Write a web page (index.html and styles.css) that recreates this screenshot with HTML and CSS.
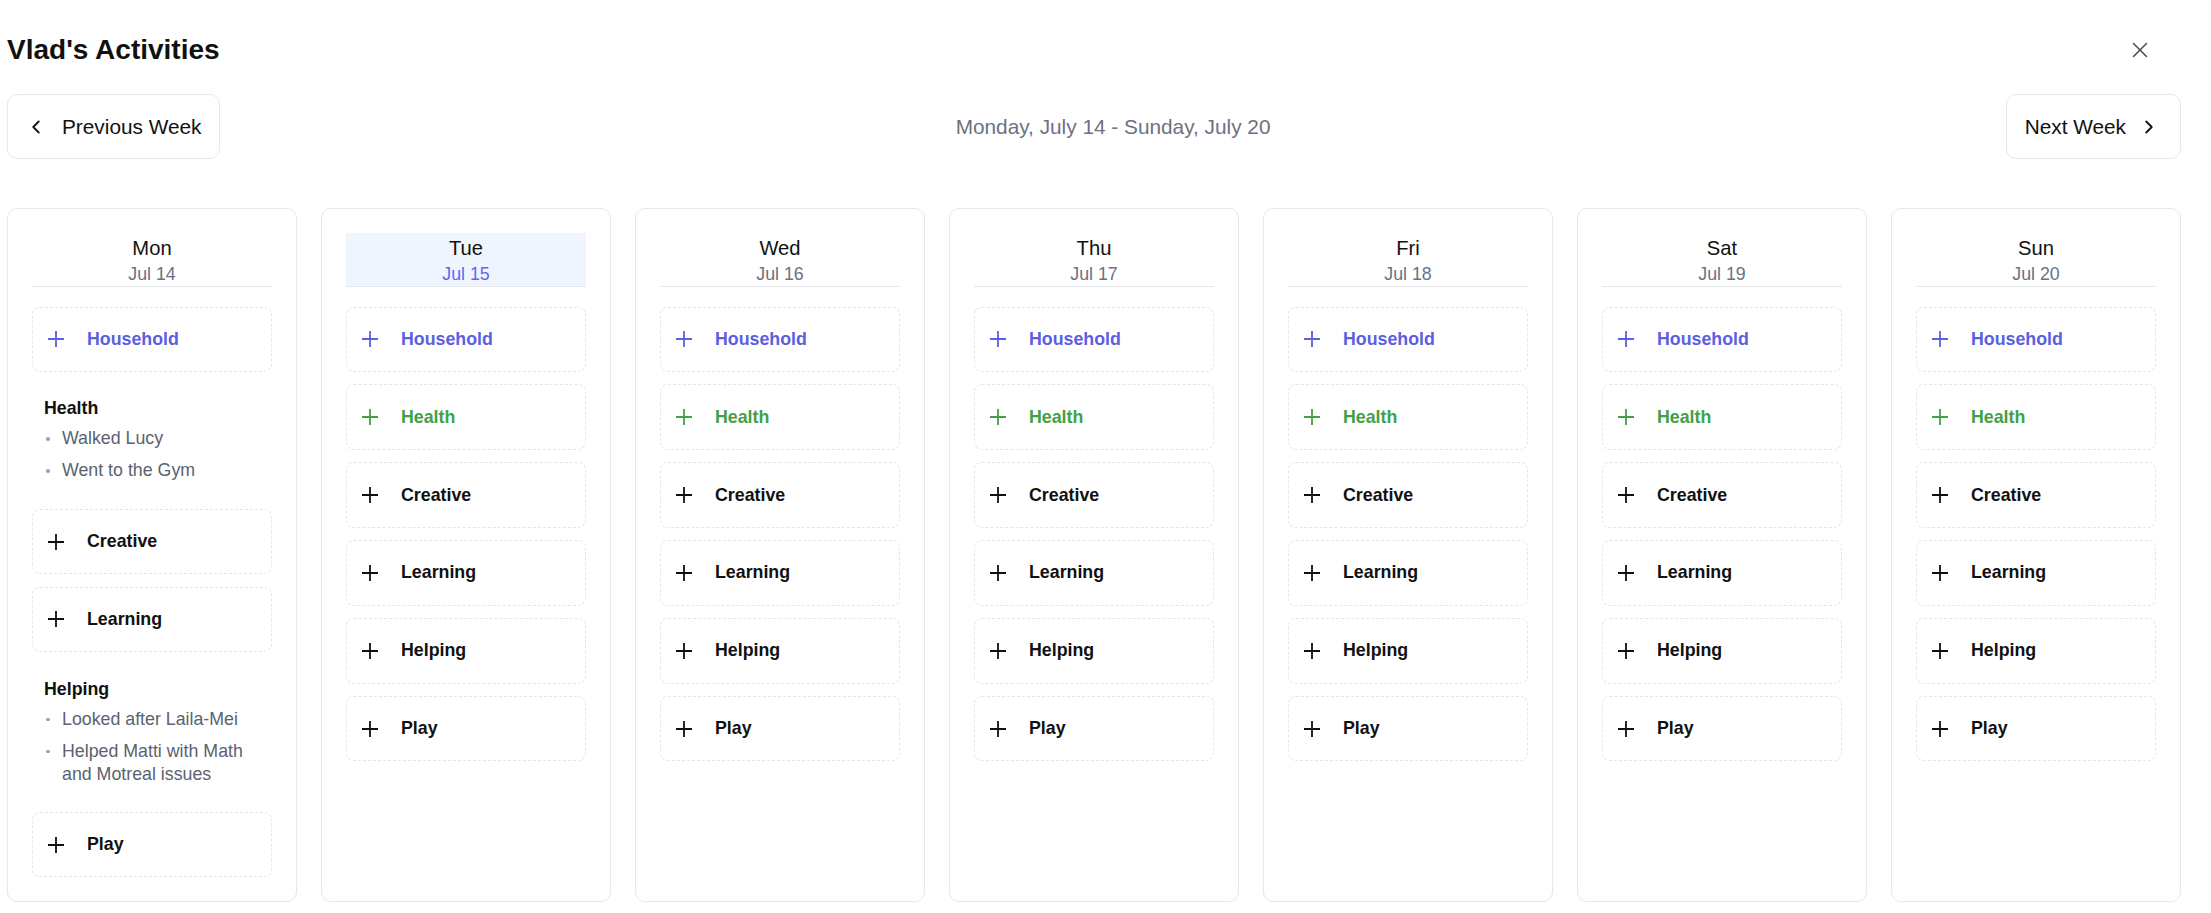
FILE: index.html
```html
<!DOCTYPE html>
<html lang="en">
<head>
<meta charset="utf-8">
<title>Vlad's Activities</title>
<link rel="stylesheet" href="styles.css">
</head>
<body>
<div class="page">
  <header class="top">
    <h1 class="title">Vlad's Activities</h1>
    <button class="close" aria-label="Close">
      <svg width="16" height="16" viewBox="0 0 16 16"><path d="M1.5 1.5l13 13M14.5 1.5l-13 13" stroke="#4b4b4b" stroke-width="1.5" stroke-linecap="round" fill="none"/></svg>
    </button>
  </header>

  <nav class="weeknav">
    <button class="navbtn navbtn-prev">
      <svg width="22" height="22" viewBox="0 0 24 24"><path d="M15 18l-6-6 6-6" stroke="#111" stroke-width="2" stroke-linecap="round" stroke-linejoin="round" fill="none"/></svg>
      <span>Previous Week</span>
    </button>
    <div class="range">Monday, July 14 - Sunday, July 20</div>
    <button class="navbtn navbtn-next">
      <span>Next Week</span>
      <svg width="22" height="22" viewBox="0 0 24 24"><path d="M9 18l6-6-6-6" stroke="#111" stroke-width="2" stroke-linecap="round" stroke-linejoin="round" fill="none"/></svg>
    </button>
  </nav>

  <div class="week">
    <section class="day">
      <div class="dayhead"><div class="dname">Mon</div><div class="ddate">Jul 14</div></div>
      <div class="items">
        <button class="add household"><svg width="16" height="16" viewBox="0 0 16 16"><path d="M0 8h16M8 0v16" stroke="currentColor" stroke-width="1.8" fill="none"/></svg><span>Household</span></button>
        <div class="entry">
          <div class="entry-title">Health</div>
          <ul class="entry-list"><li>Walked Lucy</li><li>Went to the Gym</li></ul>
        </div>
        <button class="add"><svg width="16" height="16" viewBox="0 0 16 16"><path d="M0 8h16M8 0v16" stroke="currentColor" stroke-width="1.8" fill="none"/></svg><span>Creative</span></button>
        <button class="add"><svg width="16" height="16" viewBox="0 0 16 16"><path d="M0 8h16M8 0v16" stroke="currentColor" stroke-width="1.8" fill="none"/></svg><span>Learning</span></button>
        <div class="entry">
          <div class="entry-title">Helping</div>
          <ul class="entry-list"><li>Looked after Laila-Mei</li><li>Helped Matti with Math and Motreal issues</li></ul>
        </div>
        <button class="add"><svg width="16" height="16" viewBox="0 0 16 16"><path d="M0 8h16M8 0v16" stroke="currentColor" stroke-width="1.8" fill="none"/></svg><span>Play</span></button>
      </div>
    </section>

    <section class="day">
      <div class="dayhead today"><div class="dname">Tue</div><div class="ddate">Jul 15</div></div>
      <div class="items">
        <button class="add household"><svg width="16" height="16" viewBox="0 0 16 16"><path d="M0 8h16M8 0v16" stroke="currentColor" stroke-width="1.8" fill="none"/></svg><span>Household</span></button>
        <button class="add health"><svg width="16" height="16" viewBox="0 0 16 16"><path d="M0 8h16M8 0v16" stroke="currentColor" stroke-width="1.8" fill="none"/></svg><span>Health</span></button>
        <button class="add"><svg width="16" height="16" viewBox="0 0 16 16"><path d="M0 8h16M8 0v16" stroke="currentColor" stroke-width="1.8" fill="none"/></svg><span>Creative</span></button>
        <button class="add"><svg width="16" height="16" viewBox="0 0 16 16"><path d="M0 8h16M8 0v16" stroke="currentColor" stroke-width="1.8" fill="none"/></svg><span>Learning</span></button>
        <button class="add"><svg width="16" height="16" viewBox="0 0 16 16"><path d="M0 8h16M8 0v16" stroke="currentColor" stroke-width="1.8" fill="none"/></svg><span>Helping</span></button>
        <button class="add"><svg width="16" height="16" viewBox="0 0 16 16"><path d="M0 8h16M8 0v16" stroke="currentColor" stroke-width="1.8" fill="none"/></svg><span>Play</span></button>
      </div>
    </section>

    <section class="day">
      <div class="dayhead"><div class="dname">Wed</div><div class="ddate">Jul 16</div></div>
      <div class="items">
        <button class="add household"><svg width="16" height="16" viewBox="0 0 16 16"><path d="M0 8h16M8 0v16" stroke="currentColor" stroke-width="1.8" fill="none"/></svg><span>Household</span></button>
        <button class="add health"><svg width="16" height="16" viewBox="0 0 16 16"><path d="M0 8h16M8 0v16" stroke="currentColor" stroke-width="1.8" fill="none"/></svg><span>Health</span></button>
        <button class="add"><svg width="16" height="16" viewBox="0 0 16 16"><path d="M0 8h16M8 0v16" stroke="currentColor" stroke-width="1.8" fill="none"/></svg><span>Creative</span></button>
        <button class="add"><svg width="16" height="16" viewBox="0 0 16 16"><path d="M0 8h16M8 0v16" stroke="currentColor" stroke-width="1.8" fill="none"/></svg><span>Learning</span></button>
        <button class="add"><svg width="16" height="16" viewBox="0 0 16 16"><path d="M0 8h16M8 0v16" stroke="currentColor" stroke-width="1.8" fill="none"/></svg><span>Helping</span></button>
        <button class="add"><svg width="16" height="16" viewBox="0 0 16 16"><path d="M0 8h16M8 0v16" stroke="currentColor" stroke-width="1.8" fill="none"/></svg><span>Play</span></button>
      </div>
    </section>

    <section class="day">
      <div class="dayhead"><div class="dname">Thu</div><div class="ddate">Jul 17</div></div>
      <div class="items">
        <button class="add household"><svg width="16" height="16" viewBox="0 0 16 16"><path d="M0 8h16M8 0v16" stroke="currentColor" stroke-width="1.8" fill="none"/></svg><span>Household</span></button>
        <button class="add health"><svg width="16" height="16" viewBox="0 0 16 16"><path d="M0 8h16M8 0v16" stroke="currentColor" stroke-width="1.8" fill="none"/></svg><span>Health</span></button>
        <button class="add"><svg width="16" height="16" viewBox="0 0 16 16"><path d="M0 8h16M8 0v16" stroke="currentColor" stroke-width="1.8" fill="none"/></svg><span>Creative</span></button>
        <button class="add"><svg width="16" height="16" viewBox="0 0 16 16"><path d="M0 8h16M8 0v16" stroke="currentColor" stroke-width="1.8" fill="none"/></svg><span>Learning</span></button>
        <button class="add"><svg width="16" height="16" viewBox="0 0 16 16"><path d="M0 8h16M8 0v16" stroke="currentColor" stroke-width="1.8" fill="none"/></svg><span>Helping</span></button>
        <button class="add"><svg width="16" height="16" viewBox="0 0 16 16"><path d="M0 8h16M8 0v16" stroke="currentColor" stroke-width="1.8" fill="none"/></svg><span>Play</span></button>
      </div>
    </section>

    <section class="day">
      <div class="dayhead"><div class="dname">Fri</div><div class="ddate">Jul 18</div></div>
      <div class="items">
        <button class="add household"><svg width="16" height="16" viewBox="0 0 16 16"><path d="M0 8h16M8 0v16" stroke="currentColor" stroke-width="1.8" fill="none"/></svg><span>Household</span></button>
        <button class="add health"><svg width="16" height="16" viewBox="0 0 16 16"><path d="M0 8h16M8 0v16" stroke="currentColor" stroke-width="1.8" fill="none"/></svg><span>Health</span></button>
        <button class="add"><svg width="16" height="16" viewBox="0 0 16 16"><path d="M0 8h16M8 0v16" stroke="currentColor" stroke-width="1.8" fill="none"/></svg><span>Creative</span></button>
        <button class="add"><svg width="16" height="16" viewBox="0 0 16 16"><path d="M0 8h16M8 0v16" stroke="currentColor" stroke-width="1.8" fill="none"/></svg><span>Learning</span></button>
        <button class="add"><svg width="16" height="16" viewBox="0 0 16 16"><path d="M0 8h16M8 0v16" stroke="currentColor" stroke-width="1.8" fill="none"/></svg><span>Helping</span></button>
        <button class="add"><svg width="16" height="16" viewBox="0 0 16 16"><path d="M0 8h16M8 0v16" stroke="currentColor" stroke-width="1.8" fill="none"/></svg><span>Play</span></button>
      </div>
    </section>

    <section class="day">
      <div class="dayhead"><div class="dname">Sat</div><div class="ddate">Jul 19</div></div>
      <div class="items">
        <button class="add household"><svg width="16" height="16" viewBox="0 0 16 16"><path d="M0 8h16M8 0v16" stroke="currentColor" stroke-width="1.8" fill="none"/></svg><span>Household</span></button>
        <button class="add health"><svg width="16" height="16" viewBox="0 0 16 16"><path d="M0 8h16M8 0v16" stroke="currentColor" stroke-width="1.8" fill="none"/></svg><span>Health</span></button>
        <button class="add"><svg width="16" height="16" viewBox="0 0 16 16"><path d="M0 8h16M8 0v16" stroke="currentColor" stroke-width="1.8" fill="none"/></svg><span>Creative</span></button>
        <button class="add"><svg width="16" height="16" viewBox="0 0 16 16"><path d="M0 8h16M8 0v16" stroke="currentColor" stroke-width="1.8" fill="none"/></svg><span>Learning</span></button>
        <button class="add"><svg width="16" height="16" viewBox="0 0 16 16"><path d="M0 8h16M8 0v16" stroke="currentColor" stroke-width="1.8" fill="none"/></svg><span>Helping</span></button>
        <button class="add"><svg width="16" height="16" viewBox="0 0 16 16"><path d="M0 8h16M8 0v16" stroke="currentColor" stroke-width="1.8" fill="none"/></svg><span>Play</span></button>
      </div>
    </section>

    <section class="day">
      <div class="dayhead"><div class="dname">Sun</div><div class="ddate">Jul 20</div></div>
      <div class="items">
        <button class="add household"><svg width="16" height="16" viewBox="0 0 16 16"><path d="M0 8h16M8 0v16" stroke="currentColor" stroke-width="1.8" fill="none"/></svg><span>Household</span></button>
        <button class="add health"><svg width="16" height="16" viewBox="0 0 16 16"><path d="M0 8h16M8 0v16" stroke="currentColor" stroke-width="1.8" fill="none"/></svg><span>Health</span></button>
        <button class="add"><svg width="16" height="16" viewBox="0 0 16 16"><path d="M0 8h16M8 0v16" stroke="currentColor" stroke-width="1.8" fill="none"/></svg><span>Creative</span></button>
        <button class="add"><svg width="16" height="16" viewBox="0 0 16 16"><path d="M0 8h16M8 0v16" stroke="currentColor" stroke-width="1.8" fill="none"/></svg><span>Learning</span></button>
        <button class="add"><svg width="16" height="16" viewBox="0 0 16 16"><path d="M0 8h16M8 0v16" stroke="currentColor" stroke-width="1.8" fill="none"/></svg><span>Helping</span></button>
        <button class="add"><svg width="16" height="16" viewBox="0 0 16 16"><path d="M0 8h16M8 0v16" stroke="currentColor" stroke-width="1.8" fill="none"/></svg><span>Play</span></button>
      </div>
    </section>
  </div>
</div>
</body>
</html>
```

FILE: styles.css
```css
* { box-sizing: border-box; }

body {
  margin: 0;
  background: #fff;
  color: #111;
  font-family: "Liberation Sans", Arial, sans-serif;
}

button {
  font: inherit;
  color: inherit;
  background: #fff;
  cursor: pointer;
}

.page {
  padding: 32px 30px 0 7px;
}

.top {
  display: flex;
  justify-content: space-between;
  align-items: center;
  height: 36px;
  padding-right: 25px;
}

.title {
  margin: 0;
  font-size: 28px;
  line-height: 36px;
  font-weight: 700;
  color: #111;
}

.close {
  display: flex;
  align-items: center;
  justify-content: center;
  width: 32px;
  height: 32px;
  padding: 0;
  border: 0;
  background: transparent;
}

.weeknav {
  display: flex;
  justify-content: space-between;
  align-items: center;
  margin-top: 26px;
}

.navbtn {
  display: flex;
  align-items: center;
  height: 65px;
  border: 1px solid #e5e7eb;
  border-radius: 10px;
  font-size: 20.8px;
  color: #111;
}

.navbtn svg { flex: none; }

.navbtn-prev {
  gap: 15px;
  padding: 0 18px 0 17px;
}

.navbtn-next {
  gap: 12px;
  padding: 0 20px 0 18px;
}

.range {
  font-size: 20.8px;
  color: #6b7280;
}

.week {
  display: grid;
  grid-template-columns: repeat(7, 1fr);
  gap: 24px;
  margin-top: 49px;
  align-items: stretch;
}

.day {
  border: 1px solid #e5e7eb;
  border-radius: 10px;
  padding: 24px 24px 24px;
}

.dayhead {
  text-align: center;
  border-bottom: 1px solid #e5e7eb;
  margin-bottom: 19.5px;
}

.dayhead.today {
  background: #eff5fe;
}

.dname {
  font-size: 20.2px;
  line-height: 30px;
  color: #111;
}

.ddate {
  font-size: 17.8px;
  line-height: 23px;
  color: #6b7280;
}

.today .ddate {
  color: #6366f1;
}

.items {
  display: flex;
  flex-direction: column;
  gap: 12.4px;
}

.add {
  display: flex;
  align-items: center;
  gap: 23px;
  width: 100%;
  height: 65.5px;
  padding: 0 15px;
  border: 1px dashed #e3e5e8;
  border-radius: 8px;
  font-size: 17.8px;
  font-weight: 700;
  color: #111;
  text-align: left;
}

.add svg { flex: none; }

.add.household { color: #5b5fe0; }
.add.health { color: #43a047; }

.entry {
  padding: 13px 12px 14px;
}

.entry-title {
  font-size: 17.8px;
  line-height: 23px;
  font-weight: 700;
  color: #111;
}

.entry-list {
  list-style: none;
  margin: 7px 0 0;
  padding: 0;
  display: flex;
  flex-direction: column;
  gap: 9px;
}

.entry-list li {
  display: flex;
  align-items: flex-start;
  font-size: 17.8px;
  line-height: 23px;
  color: #5b6270;
}

.entry-list li::before {
  content: "";
  flex: none;
  width: 3.5px;
  height: 3.5px;
  margin: 10px 12.5px 0 2px;
  border-radius: 50%;
  background: #9ca3af;
}
```
